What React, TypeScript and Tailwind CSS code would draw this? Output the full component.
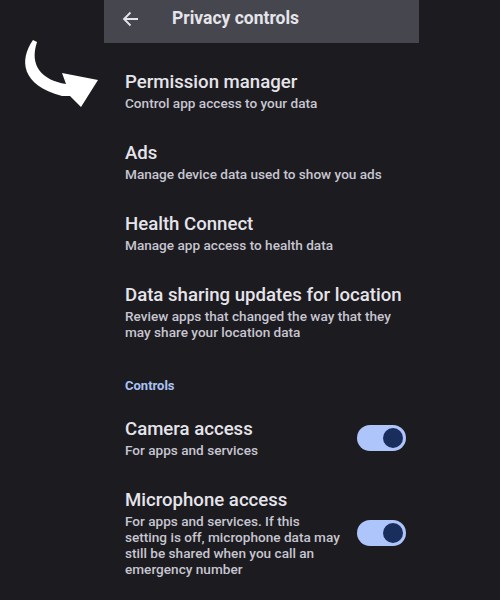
import React from "react";

type Item = { title: string; lines: string[] };

const items: Item[] = [
	{ title: "Permission manager", lines: ["Control app access to your data"] },
	{ title: "Ads", lines: ["Manage device data used to show you ads"] },
	{ title: "Health Connect", lines: ["Manage app access to health data"] },
	{
		title: "Data sharing updates for location",
		lines: ["Review apps that changed the way that they", "may share your location data"],
	},
];

const controls: Item[] = [
	{ title: "Camera access", lines: ["For apps and services"] },
	{
		title: "Microphone access",
		lines: ["For apps and services. If this", "setting is off, microphone data may", "still be shared when you call an", "emergency number"],
	},
];

function Toggle() {
	return (
		<div className="flex h-[26px] w-[49px] shrink-0 items-center justify-end rounded-full bg-[#adc5fb] pr-[3px]">
			<div className="h-[20px] w-[20px] rounded-full bg-[#1a2e5e]" />
		</div>
	);
}

function Row({ item }: { item: Item }) {
	return (
		<div>
			<h3 className="text-[18.6px] font-medium leading-[22px] text-[#e6e4eb]">{item.title}</h3>
			<p className="mt-[2px] text-[13.6px] font-medium leading-[16px] text-[#c7c6d0]">
				{item.lines.map((l) => (
					<span key={l} className="block">
						{l}
					</span>
				))}
			</p>
		</div>
	);
}

export default function App() {
	return (
		<div className="relative min-h-[600px] w-[500px] bg-[#1c1b20] font-['Roboto',sans-serif]">
			<svg className="absolute left-0 top-0" width="110" height="120" viewBox="0 0 110 120">
				<path
					d="M33 40 C19 60 21 85 62 96 L70 96 L81 107 L98 80 L62 73 L66 84 C42 80 29 66 37 42 Z"
					fill="#ffffff"
				/>
			</svg>

			<header className="ml-[104px] flex h-[43px] w-[315px] items-start gap-[31px] bg-[#45464e] pl-[17px] pt-[6px]">
				<svg width="20" height="24" viewBox="0 0 20 24" className="mt-[1px]" fill="none" stroke="#e6e4eb" strokeWidth="1.8">
					<path d="M17 12 H3 M9.5 5.5 L3 12 L9.5 18.5" />
				</svg>
				<h1 className="text-[17.5px] font-bold leading-[24px] text-[#e6e4eb]">Privacy controls</h1>
			</header>

			<main className="ml-[104px] w-[315px] pl-[21px] pr-[13px] pt-[28px]">
				<div className="flex flex-col gap-[31px]">
					{items.map((it) => (
						<Row key={it.title} item={it} />
					))}
				</div>

				<h2 className="mt-[38px] text-[13px] font-bold leading-[16px] text-[#a9c3f4]">Controls</h2>

				<div className="mt-[24px] flex flex-col gap-[31px]">
					{controls.map((it) => (
						<div key={it.title} className="flex items-center justify-between">
							<Row item={it} />
							<Toggle />
						</div>
					))}
				</div>
			</main>
		</div>
	);
}
